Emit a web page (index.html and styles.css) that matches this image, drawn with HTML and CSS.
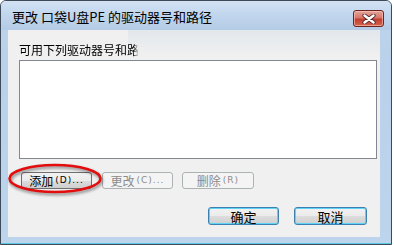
FILE: index.html
```html
<!DOCTYPE html>
<html>
<head>
<meta charset="utf-8">
<link rel="stylesheet" href="styles.css">
</head>
<body>
<div class="window">
  <div class="titlebar">
    <span class="title">更改 口袋U盘PE 的驱动器号和路径</span>
    <div class="close">
      <svg width="14" height="10" viewBox="0 0 14 10">
        <path d="M2.5 1.5 L11.5 8.5 M11.5 1.5 L2.5 8.5" stroke="#5a2a2a" stroke-width="4.2" stroke-linecap="round" fill="none"/>
        <path d="M2.5 1.5 L11.5 8.5 M11.5 1.5 L2.5 8.5" stroke="#ffffff" stroke-width="2.4" stroke-linecap="round" fill="none"/>
      </svg>
    </div>
  </div>
  <div class="client">
    <div class="glass"></div>
    <div class="label"><span class="labeltext">可用下列驱动器号和路径</span></div>
    <div class="listbox"></div>
    <div class="row1">
      <div class="btnwrap">
        <button class="btn">添加<span class="lat">(D)...</span></button>
        <svg class="ring" width="97" height="33" viewBox="0 0 97 33">
          <ellipse cx="48" cy="15.5" rx="45.5" ry="13.5" fill="none" stroke="#e30d0d" stroke-width="2.6"/>
        </svg>
      </div>
      <button class="btn disabled">更改<span class="lat">(C)...</span></button>
      <button class="btn disabled wide">删除<span class="lat">(R)</span></button>
    </div>
    <div class="row2">
      <button class="btn default">确定</button>
      <button class="btn default cancel">取消</button>
    </div>
  </div>
</div>
</body>
</html>
```
FILE: styles.css
```css
html, body {
  margin: 0;
  padding: 0;
  background: #ffffff;
}
body {
  width: 394px;
  height: 245px;
  overflow: hidden;
  font-family: "Noto Sans CJK SC", "Liberation Sans", sans-serif;
}
.window {
  box-sizing: border-box;
  width: 392px;
  height: 245px;
  border: 1px solid #3f4a58;
  border-radius: 6px 6px 0 0;
  background: linear-gradient(to bottom, #c6d9ef 0px, #bdd3ec 28px, #b9d1ea 60px, #bcd4ec 100%);
  box-shadow: inset 0 -1px 0 #5cc8e4;
  display: flex;
  flex-direction: column;
}
.titlebar {
  height: 29px;
  display: flex;
  align-items: flex-start;
  justify-content: space-between;
  background: linear-gradient(to bottom, #d3e2f3 0%, #c2d7ee 45%, #b4cbe6 100%);
  border-radius: 5px 5px 0 0;
}
.title {
  margin: 8px 0 0 11px;
  font-size: 13px;
  line-height: 16px;
  color: #000;
}
.close {
  box-sizing: border-box;
  width: 31px;
  height: 17px;
  margin: 9px 7px 0 0;
  border: 1px solid #6b2420;
  border-radius: 3px;
  background: linear-gradient(to bottom, #e4a59a 0%, #d6766a 45%, #c23e2e 55%, #d5654f 100%);
  box-shadow: inset 0 0 0 1px rgba(255, 200, 190, 0.6);
  display: flex;
  align-items: center;
  justify-content: center;
}
.client {
  position: relative;
  height: 207px;
  margin: 0 11px 0 7px;
  background: #f0f0f0;
  box-sizing: border-box;
  padding: 12px 3px 0 11px;
  display: flex;
  flex-direction: column;
}
.glass {
  position: absolute;
  left: 120px;
  right: 0;
  top: 0;
  height: 26px;
  background: linear-gradient(to bottom, rgba(200, 214, 228, 0.35), rgba(240, 240, 240, 0));
}
.label {
  position: relative;
  height: 16px;
  font-size: 12px;
  line-height: 16px;
  color: #000;
}
.labeltext {
  display: inline-block;
  white-space: nowrap;
  -webkit-mask-image: linear-gradient(to right, #000 0px, #000 114px, transparent 120px);
  mask-image: linear-gradient(to right, #000 0px, #000 114px, transparent 120px);
}
.listbox {
  margin-top: 2px;
  height: 99px;
  box-sizing: border-box;
  border: 1px solid #828790;
  background: #ffffff;
}
.row1 {
  margin-top: 13px;
  margin-left: 2px;
  display: flex;
  gap: 9px;
}
.btnwrap {
  position: relative;
  display: flex;
  margin-right: 1px;
}
.ring {
  position: absolute;
  left: -14px;
  top: -9px;
  filter: drop-shadow(1px 2px 1.5px rgba(0, 0, 0, 0.45));
  pointer-events: none;
}
.btn {
  box-sizing: border-box;
  width: 71px;
  height: 17px;
  padding: 0;
  border: 1px solid #707070;
  border-radius: 3px;
  background: linear-gradient(to bottom, #f2f2f2 0%, #ebebeb 50%, #dddddd 51%, #cfcfcf 100%);
  font-family: "Noto Sans CJK SC", "Liberation Sans", sans-serif;
  font-size: 12px;
  line-height: 15px;
  color: #000;
  display: flex;
  align-items: center;
  justify-content: center;
}
.lat {
  font-family: "DejaVu Sans", sans-serif;
  font-size: 9px;
  letter-spacing: 1px;
  margin-left: 2px;
}
.btn.disabled {
  border-color: #adb2b5;
  background: #f4f4f4;
  color: #8b8b8b;
}
.btn.wide {
  width: 72px;
}
.row2 {
  margin-top: 18px;
  display: flex;
  justify-content: flex-end;
  gap: 15px;
  padding-right: 10px;
}
.btn.default {
  height: 18px;
  border-color: #3c7fb1;
  box-shadow: inset 0 0 0 1px #5fd2f6;
  font-size: 13px;
}
.btn.cancel {
  width: 73px;
}
```
